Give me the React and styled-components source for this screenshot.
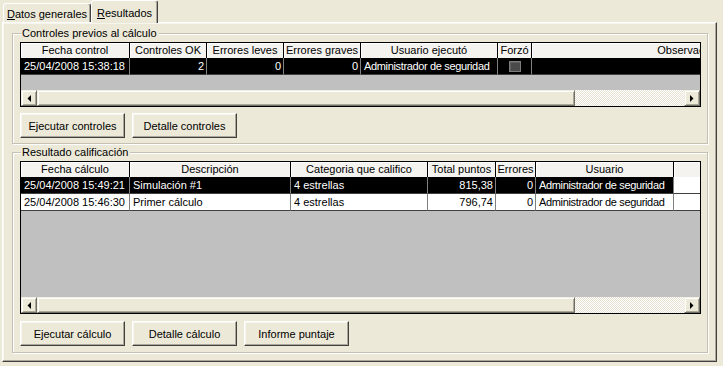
import React from 'react';
import styled, { createGlobalStyle } from 'styled-components';

const GlobalStyle = createGlobalStyle`
  html, body { margin: 0; padding: 0; background: #ECE9D8; }
  body {
    font-family: "Liberation Sans", Arial, sans-serif;
    font-size: 11px;
    color: #000;
  }
  #root { width: 723px; height: 366px; overflow: hidden; }
`;

const Window = styled.div`
  width: 723px;
  height: 366px;
  background: #ECE9D8;
  box-sizing: border-box;
`;

const TabStrip = styled.div`
  position: relative;
  z-index: 1;
  display: flex;
  align-items: flex-end;
  height: 22px;
  padding-left: 3px;
  box-sizing: border-box;
`;

const Tab = styled.div`
  box-sizing: border-box;
  width: ${p => p.$width}px;
  height: ${p => (p.$active ? 23 : 19)}px;
  margin-bottom: ${p => (p.$active ? -1 : 0)}px;
  padding-top: ${p => (p.$active ? 6 : 4)}px;
  background: #ECE9D8;
  border: 1px solid;
  border-bottom: none;
  border-color: #fff #404040 transparent #fff;
  border-radius: 3px 3px 0 0;
  box-shadow: inset -1px 0 0 #ACA899;
  text-align: center;
  line-height: 13px;
  white-space: nowrap;
`;

const Panel = styled.div`
  box-sizing: border-box;
  margin-left: 2px;
  width: 715px;
  height: 340px;
  border: 1px solid;
  border-color: #fff #404040 #404040 #fff;
  box-shadow: inset -1px -1px 0 #ACA899, inset 1px 1px 0 #F6F5EE;
  padding: 10px 8px 0 9px;
  display: flex;
  flex-direction: column;
  gap: 8px;
`;

const Group = styled.div`
  position: relative;
  box-sizing: border-box;
  border: 1px solid #C4C1B2;
  box-shadow: inset 1px 1px 0 #fff, 1px 1px 0 #fff;
  padding: 8px 6px ${p => p.$pb}px 7px;
  display: flex;
  flex-direction: column;
  gap: ${p => p.$gap}px;
`;

const GroupLabel = styled.span`
  position: absolute;
  top: -7px;
  left: 8px;
  padding: 0 2px 0 1px;
  background: #ECE9D8;
  line-height: 13px;
  white-space: nowrap;
`;

const Grid = styled.div`
  box-sizing: border-box;
  height: ${p => p.$h}px;
  border: 1px solid #000;
  background: #C0C0C0;
  display: flex;
  flex-direction: column;
  overflow: hidden;
`;

const Row = styled.div`
  flex: none;
  display: grid;
  grid-template-columns: ${p => p.$cols};
  height: ${p => p.$h}px;
`;

const HeadCell = styled.div`
  box-sizing: border-box;
  background: #F4F3EF;
  border-right: ${p => (p.$filler ? 'none' : '1px solid #000')};
  box-shadow: inset 1px 1px 0 #fff;
  text-align: center;
  line-height: 15px;
  white-space: nowrap;
  overflow: hidden;
`;

const Cell = styled.div`
  box-sizing: border-box;
  background: ${p => (p.$sel ? '#000' : '#fff')};
  color: ${p => (p.$sel ? '#fff' : '#000')};
  border-right: ${p => (p.$filler ? 'none' : '1px solid #808080')};
  border-bottom: 1px solid #404040;
  padding: 0 2px 0 ${p => (p.$align === 'left' ? 3 : 2)}px;
  text-align: ${p => p.$align || 'left'};
  letter-spacing: ${p => (p.$tight ? '-0.35px' : 'normal')};
  line-height: 16px;
  white-space: nowrap;
  overflow: hidden;
  display: ${p => (p.$center ? 'flex' : 'block')};
  align-items: center;
  justify-content: center;
`;

const CheckBox = styled.span`
  box-sizing: border-box;
  display: block;
  width: 12px;
  height: 11px;
  border: 1px solid #7C7C7C;
  background: #4A4A4A;
  box-shadow: inset 1px 1px 0 #5E5E5E;
`;

const Filler = styled.div`
  flex: 1;
  background: #C0C0C0;
`;

const HScroll = styled.div`
  flex: none;
  display: flex;
  height: 16px;
  background: #ECE9D8;
`;

const ScrollPart = styled.div`
  box-sizing: border-box;
  flex: none;
  width: ${p => p.$w}px;
  height: 16px;
  display: flex;
  align-items: center;
  justify-content: center;
  background: #ECE9D8;
  border: 1px solid;
  border-color: #F1EFE2 #716F64 #716F64 #F1EFE2;
  box-shadow: inset 1px 1px 0 #fff, inset -1px -1px 0 #ACA899;
`;

const Track = styled.div`
  flex: 1;
  height: 16px;
  background: repeating-conic-gradient(#fff 0 25%, #E6E3D4 0 50%) 0 0 / 2px 2px;
`;

const ButtonRow = styled.div`
  display: flex;
  gap: 7px;
`;

const Button = styled.button`
  box-sizing: border-box;
  width: 105px;
  height: 25px;
  padding: 0;
  font-family: inherit;
  font-size: 11px;
  color: #000;
  background: #ECE9D8;
  border: 1px solid;
  border-color: #fff #404040 #404040 #fff;
  box-shadow: inset -1px -1px 0 #ACA899, inset 1px 1px 0 #F6F5EE;
  cursor: default;
`;

const Arrow = ({ dir }) => (
  <svg width="4" height="7" viewBox="0 0 4 7">
    {dir === 'left' ? (
      <polygon points="4,0 4,7 0.5,3.5" fill="#000" />
    ) : (
      <polygon points="0,0 0,7 3.5,3.5" fill="#000" />
    )}
  </svg>
);

const Scrollbar = () => (
  <HScroll>
    <ScrollPart $w={16}><Arrow dir="left" /></ScrollPart>
    <ScrollPart $w={538} />
    <Track />
    <ScrollPart $w={16}><Arrow dir="right" /></ScrollPart>
  </HScroll>
);

const cols1 = '109px 77px 77px 77px 137px 34px 325px';
const cols2 = '109px 161px 137px 68px 40px 138px 1fr';

const heads1 = ['Fecha control', 'Controles OK', 'Errores leves', 'Errores graves', 'Usuario ejecutó', 'Forzó', 'Observaciones'];
const heads2 = ['Fecha cálculo', 'Descripción', 'Categoria que califico', 'Total puntos', 'Errores', 'Usuario', ''];

const rows2 = [
  { sel: true, d: ['25/04/2008 15:49:21', 'Simulación #1', '4 estrellas', '815,38', '0', 'Administrador de seguridad'] },
  { sel: false, d: ['25/04/2008 15:46:30', 'Primer cálculo', '4 estrellas', '796,74', '0', 'Administrador de seguridad'] },
];
const align2 = ['left', 'left', 'left', 'right', 'right', 'left'];

export default function App() {
  return (
    <Window>
      <GlobalStyle />
      <TabStrip>
        <Tab $width={88}><u>D</u>atos generales</Tab>
        <Tab $width={67} $active><u>R</u>esultados</Tab>
      </TabStrip>
      <Panel>
        <Group $pb={5} $gap={6}>
          <GroupLabel>Controles previos al cálculo</GroupLabel>
          <Grid $h={65}>
            <Row $cols={cols1} $h={15}>
              {heads1.map(h => <HeadCell key={h}>{h}</HeadCell>)}
            </Row>
            <Row $cols={cols1} $h={17}>
              <Cell $sel $align="left">25/04/2008 15:38:18</Cell>
              <Cell $sel $align="right">2</Cell>
              <Cell $sel $align="right">0</Cell>
              <Cell $sel $align="right">0</Cell>
              <Cell $sel $align="left" $tight>Administrador de seguridad</Cell>
              <Cell $sel $center><CheckBox /></Cell>
              <Cell $sel $align="left" $filler></Cell>
            </Row>
            <Filler />
            <Scrollbar />
          </Grid>
          <ButtonRow>
            <Button>Ejecutar controles</Button>
            <Button>Detalle controles</Button>
          </ButtonRow>
        </Group>
        <Group $pb={6} $gap={7}>
          <GroupLabel>Resultado calificación</GroupLabel>
          <Grid $h={153}>
            <Row $cols={cols2} $h={15}>
              {heads2.map((h, i) => <HeadCell key={i} $filler={i === 6}>{h}</HeadCell>)}
            </Row>
            {rows2.map((r, ri) => (
              <Row key={ri} $cols={cols2} $h={17}>
                {r.d.map((v, i) => (
                  <Cell key={i} $sel={r.sel} $align={align2[i]} $tight={i === 5}>{v}</Cell>
                ))}
                <Cell $filler $align="left"></Cell>
              </Row>
            ))}
            <Filler />
            <Scrollbar />
          </Grid>
          <ButtonRow>
            <Button>Ejecutar cálculo</Button>
            <Button>Detalle cálculo</Button>
            <Button>Informe puntaje</Button>
          </ButtonRow>
        </Group>
      </Panel>
    </Window>
  );
}
